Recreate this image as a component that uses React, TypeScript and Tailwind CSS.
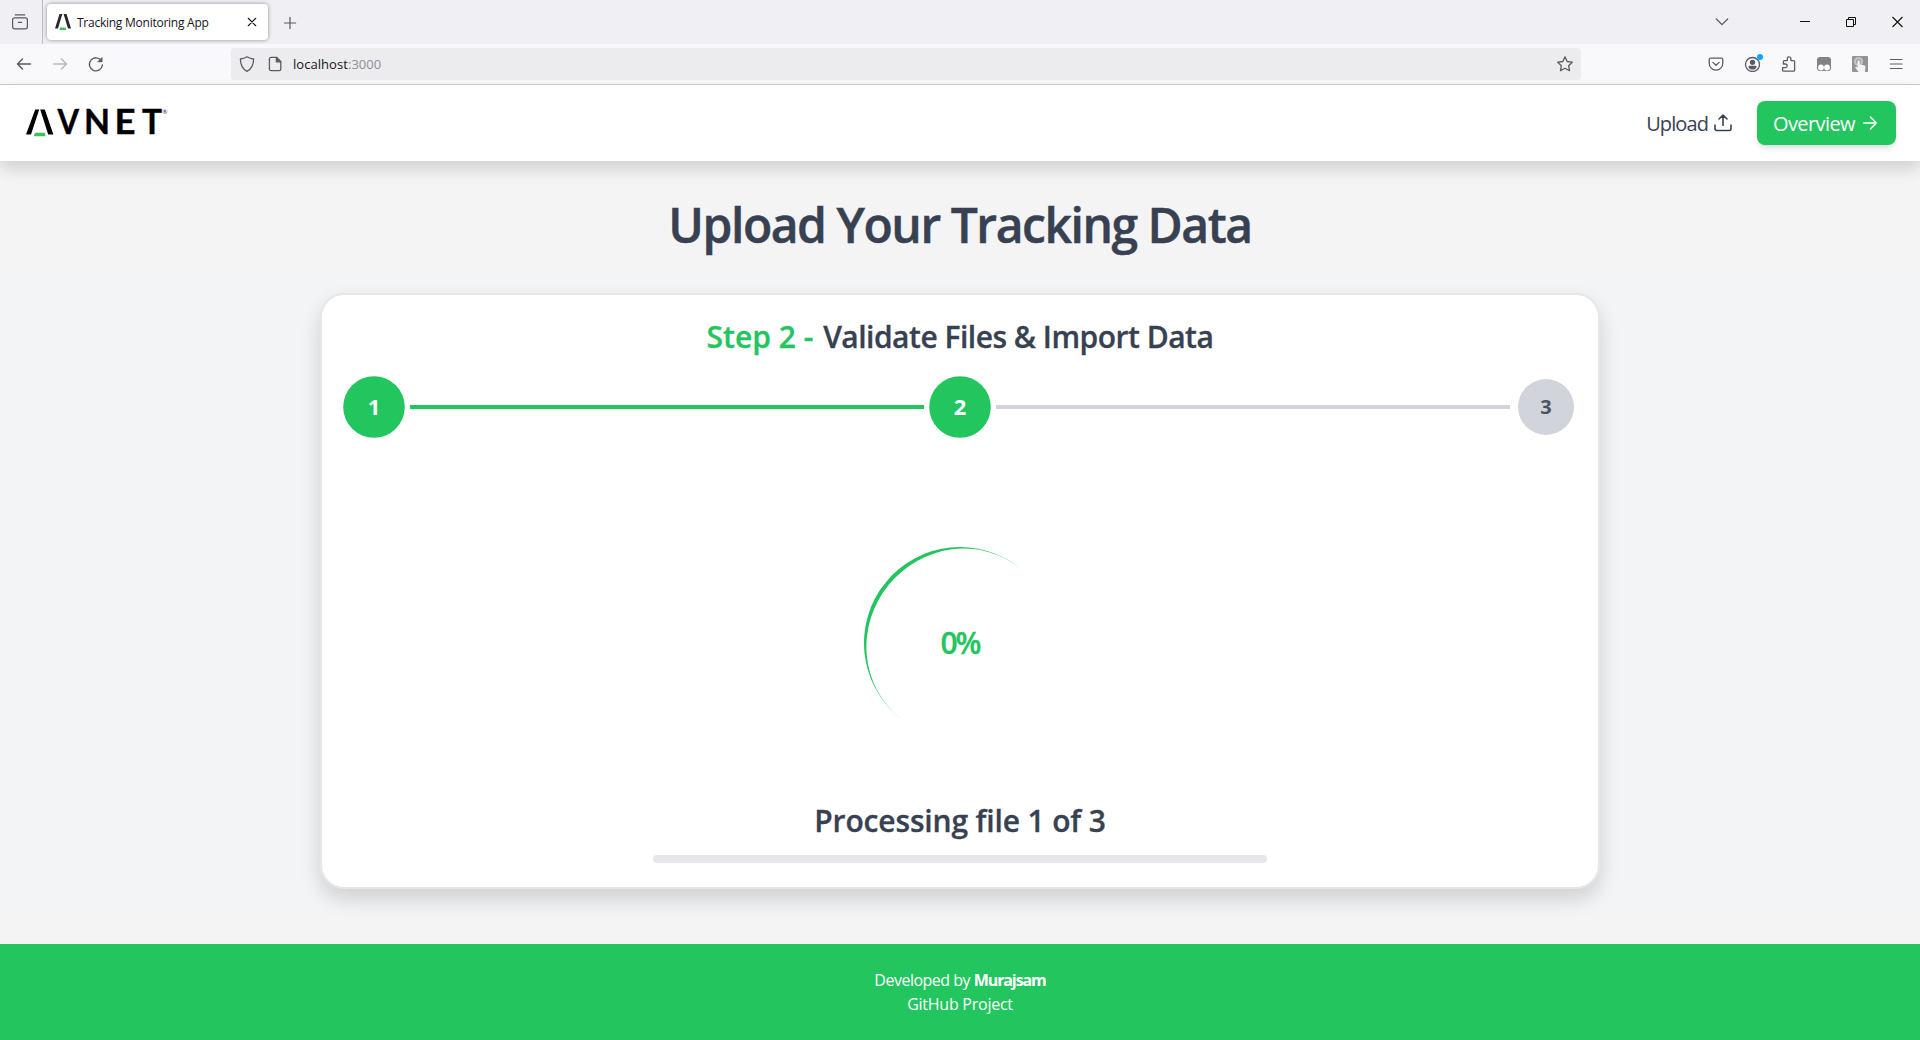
import React from "react";

const ui = "font-['Open_Sans',sans-serif]";

function BrandMark() {
  return (
    <svg width="146" height="52" viewBox="0 -12 146 52" className="block">
      <path d="M0 25.6 9.2 0.4h4L5 25.6zM14.2 0.4h4.6L27.4 25.6h-5.2z" fill="#000" />
      <path d="M9 23.8h9.6l1 3.4H7.8z" fill="#3cc05a" />
      <g fontFamily="Lato, sans-serif" fontWeight="700" fontSize="35" fill="#000" stroke="#000" strokeWidth=".4">
        <text x="31.5" y="25.4" textLength="21.5" lengthAdjust="spacingAndGlyphs">V</text>
        <text x="58" y="25.4" textLength="26" lengthAdjust="spacingAndGlyphs">N</text>
        <text x="88.5" y="25.4" textLength="21" lengthAdjust="spacingAndGlyphs">E</text>
        <text x="116" y="25.4" textLength="20" lengthAdjust="spacingAndGlyphs">T</text>
      </g>
      <text x="136.6" y="4.8" fontFamily="Lato, sans-serif" fontSize="6" fill="#333">®</text>
    </svg>
  );
}

type IconProps = { children: React.ReactNode; size?: number; className?: string; width?: number };

function Icon({ children, size = 16, className = "", width = 1.3 }: IconProps) {
  return (
    <svg
      width={size}
      height={size}
      viewBox="0 0 16 16"
      fill="none"
      stroke="currentColor"
      strokeWidth={width}
      strokeLinecap="round"
      strokeLinejoin="round"
      className={"block shrink-0 " + className}
    >
      {children}
    </svg>
  );
}

function TabBar() {
  return (
    <div className="flex h-11 items-center bg-[#f0eff4] text-[#5b5b66]">
      <div className="flex h-full w-[43px] items-center border-r border-[#bdbcc4] pl-3">
        <Icon>
          <path d="M3.2 .8h9.6M2.6 3.8h10.8a2 2 0 0 1 2 2v7a2 2 0 0 1-2 2H2.6a2 2 0 0 1-2-2v-7a2 2 0 0 1 2-2zM6.4 8.400h3.200" />
        </Icon>
      </div>
      <div className="ml-1 flex h-9 w-[221px] items-center rounded bg-white pl-2 shadow-[0_0_4px_rgba(0,0,0,0.4)]">
        <svg width="16" height="16" viewBox="0 0 16 16" className="block shrink-0">
          <path d="M0 14.6 4.5 0h2.8L3 14.6zM8.6 0h2.9L16 14.6h-3z" fill="#2b2325" />
          <path d="M5 13.6h5.6l.7 2.4H4.4z" fill="#3cc05a" />
        </svg>
        <span className="ml-1.5 w-[168px] pt-0.5 text-[12px] tracking-[-0.25px] whitespace-nowrap text-[#15141a]">
          Tracking Monitoring App
        </span>
        <Icon size={10} width={1.7} className="ml-0.5 text-[#15141a]">
          <path d="M2 2l12 12M14 2L2 14" />
        </Icon>
      </div>
      <Icon size={14} width={1.4} className="mt-px ml-[15px]">
        <path d="M8 1.6v12.8M1.6 8h12.8" />
      </Icon>
      <Icon size={14} width={1.5} className="ml-auto">
        <path d="M1.5 4.6 8 11l6.5-6.400" />
      </Icon>
      <svg width="104" height="12" viewBox="0 0 104 12" fill="none" stroke="#111" className="mr-4 ml-[71px] block">
        <path d="M0 5.5h10" />
        <path d="M46.5 3.5h7v7h-7zM48.5 3.5v-2h7v7h-2" />
        <path d="M92.500 1l10 10M102.500 1l-10 10" strokeWidth="1.1" />
      </svg>
    </div>
  );
}

function Toolbar() {
  return (
    <div className="flex h-[41px] items-center border-b border-[#c9c9cc] bg-[#f9f9fb] text-[#5b5b66]">
      <Icon className="ml-4" width={1.5}>
        <path d="M14.5 8H1.5M6.5 3 1.5 8l5 5" />
      </Icon>
      <Icon className="ml-5 text-[#b8b8be]" width={1.5}>
        <path d="M1.5 8h13M9.5 3l5 5-5 5" />
      </Icon>
      <Icon className="ml-5" width={1.4}>
        <path d="M13.4 4.8A6.500 6.500 0 1 0 14.400 9" />
        <path d="M14.2 1.4v4.500H9.700z" fill="currentColor" strokeWidth=".5" />
      </Icon>
      <div className="ml-[127px] flex h-8 w-[1350px] items-center rounded bg-[#ececee] pl-2">
        <Icon>
          <path d="M8 .8c2 1.300 4.300 2 6.600 2.200 0 5.500-1.900 9.900-6.600 12.300C3.300 12.900 1.400 8.500 1.400 3 3.700 2.800 6 2.100 8 .8z" />
        </Icon>
        <Icon className="ml-3">
          <path d="M4 1.400h5.600l4.200 4.200V13a1.600 1.600 0 0 1-1.600 1.600H4A1.600 1.600 0 0 1 2.400 13V3A1.600 1.600 0 0 1 4 1.400z" />
          <path d="M9.400 1.400v4.400h4.400z" fill="currentColor" />
        </Icon>
        <span className="ml-[10px] pt-0.5 text-[13px] tracking-[0.05px] whitespace-nowrap text-[#15141a]">
          localhost<span className="text-[#8f8f98]">:3000</span>
        </span>
        <Icon className="mr-2 ml-auto">
          <path d="M8 .9l2.200 4.600 5.100.7-3.700 3.500.9 5L8 12.300l-4.500 2.400.9-5L.7 6.200l5.100-.7z" />
        </Icon>
      </div>
      <div className="mr-4 ml-auto flex items-center gap-5">
        <Icon>
          <path d="M2.700 2.200h10.600a1.500 1.500 0 0 1 1.500 1.500v3.600a6.800 6.800 0 0 1-13.600 0V3.700a1.500 1.500 0 0 1 1.500-1.500zM4.900 6.400 8 9.300l3.100-2.900" />
        </Icon>
        <div className="relative">
          <Icon>
            <circle cx="8.500" cy="8.500" r="7" />
            <circle cx="8.500" cy="6.300" r="2" fill="currentColor" />
            <path d="M5.200 10.400h6.600c0 1.600-1.400 2.500-3.300 2.500s-3.300-.9-3.300-2.500z" fill="currentColor" />
          </Icon>
          <span className="absolute -top-[2px] -right-[3px] size-[6px] rounded-full bg-[#00a8ff]" />
        </div>
        <Icon className="translate-x-px">
          <path d="M2.600 15.200h10a1 1 0 0 0 1-1V5.600a1 1 0 0 0-1-1H9.900V2.700a1.800 1.800 0 0 0-3.600 0v1.900H3.400a1 1 0 0 0-1 1V8h2a1.800 1.800 0 0 1 0 3.600h-2.800v2.600a1 1 0 0 0 1 1z" />
        </Icon>
        <svg width="16" height="16" viewBox="0 0 16 16" className="block">
          <rect x="1" y="1" width="14" height="14" rx="3" fill="#828282" />
          <circle cx="5" cy="11.500" r="2.900" fill="#fff" />
          <circle cx="11" cy="11.500" r="2.900" fill="#fff" />
        </svg>
        <svg width="16" height="16" viewBox="0 0 16 16" className="block">
          <rect width="16" height="16" rx="1" fill="#939393" />
          <circle cx="6.500" cy="5.500" r="4.600" fill="#c4c4c4" />
          <circle cx="6.500" cy="5.500" r="2.600" fill="#a4a4a4" />
          <path d="M5.600 5.500a1.100 1.100 0 0 1 2.200 0v3l4 .8c1.300.3 1.800 1 1.700 2l-.6 4.700H6.600L3.200 11.600c0-1.200 1.500-1.200 2.400-.2z" fill="#eef4fa" />
        </svg>
        <Icon width={1.200}>
          <path d="M2.400 3.500h11.700M2.400 8h11.700M2.400 12.500h11.700" />
        </Icon>
      </div>
    </div>
  );
}

function Header() {
  return (
    <header className="relative flex h-[76px] items-center bg-white pr-6 pl-[26px] shadow-[0_8px_15px_rgba(0,0,0,0.14)]">
      <BrandMark />
      <a className="ml-auto flex items-center text-[20px] font-medium text-[#374151]">
        <span className="pt-0.5 tracking-[-0.9px]">Upload</span>
        <svg width="18" height="18" viewBox="0 0 18 18" fill="none" stroke="currentColor" strokeWidth="1.600" strokeLinecap="round" strokeLinejoin="round" className="ml-1.5 block">
          <path d="M1 11v3.500A2 2 0 0 0 3 16.500h12a2 2 0 0 0 2-2V11M9 11.500V1.500M5 5l4-3.800L13 5" />
        </svg>
      </a>
      <a className="ml-[25px] flex h-11 w-[139px] items-center rounded-lg bg-[#22c55e] pl-4 text-[20px] font-medium text-white shadow-md">
        <span className="w-[84px] pt-0.5 tracking-[-0.6px] whitespace-nowrap">Overview</span>
        <svg width="14" height="14" viewBox="0 0 14 14" fill="none" stroke="currentColor" strokeWidth="1.500" strokeLinecap="round" strokeLinejoin="round" className="ml-1.5 block">
          <path d="M.8 7h12.400M7.400 1l5.800 6-5.800 6" />
        </svg>
      </a>
    </header>
  );
}

function Stepper() {
  return (
    <div className="flex items-center text-[20px] font-bold">
      <div className="flex size-14 scale-110 items-center justify-center rounded-full bg-[#22c55e] text-white">1</div>
      <div className="mx-2 h-1 flex-1 bg-[#22c55e]" />
      <div className="flex size-14 scale-110 items-center justify-center rounded-full bg-[#22c55e] text-white">2</div>
      <div className="mx-2 h-1 flex-1 bg-[#d1d5db]" />
      <div className="flex size-14 items-center justify-center rounded-full bg-[#d1d5db] text-[#4b5563]">3</div>
    </div>
  );
}

export default function App() {
  return (
    <div className={"flex h-[1040px] w-full flex-col overflow-hidden bg-[#f4f4f4] " + ui}>
      <TabBar />
      <Toolbar />
      <Header />
      <h1 className="flex h-[108px] items-center justify-center pt-5 text-[48px] leading-[48px] font-semibold tracking-[-1.45px] text-[#374151] [-webkit-text-stroke:0.5px_#374151]">
        Upload Your Tracking Data
      </h1>
      <main className="flex h-[644px] justify-center bg-[#f3f4f6] pt-6">
        <section className="flex h-[596px] w-[1280px] flex-col rounded-3xl border-2 border-[#e5e7eb] bg-white px-6 pt-6 shadow-[0_10px_20px_rgba(0,0,0,0.15)]">
          <h2 className="h-[60px] text-center text-[30px] leading-9 font-semibold text-[#374151] [-webkit-text-stroke:0.3px_currentColor]">
            <span className="mr-[2px] text-[#22c55e]">Step 2 - </span>
            <span className="tracking-[-0.5px]">Validate Files &amp; Import Data</span>
          </h2>
          <Stepper />
          <div className="mt-28 grid h-48 place-items-center">
            <div className="col-start-1 row-start-1 size-48 -rotate-[51deg] rounded-full border-t-4 border-[#22c55e]" />
            <span className="col-start-1 row-start-1 text-[30px] leading-9 font-semibold tracking-[-2px] text-[#22c55e] [-webkit-text-stroke:0.3px_currentColor]">0%</span>
          </div>
          <p className="mt-[64px] text-center text-[30px] leading-9 font-semibold tracking-[-0.15px] text-[#374151] [-webkit-text-stroke:0.3px_currentColor]">
            Processing file 1 of 3
          </p>
          <div className="mt-4 h-2 w-[614px] self-center rounded bg-[#e5e7eb]" />
        </section>
      </main>
      <footer className="mt-auto flex h-24 flex-col items-center justify-center bg-[#22c55e] text-[16px] leading-6 text-white">
        <p className="tracking-[-0.5px]">
          Developed by <span className="font-bold tracking-[-1.1px]">Murajsam</span>
        </p>
        <p className="tracking-[-0.25px]">GitHub Project</p>
      </footer>
    </div>
  );
}
